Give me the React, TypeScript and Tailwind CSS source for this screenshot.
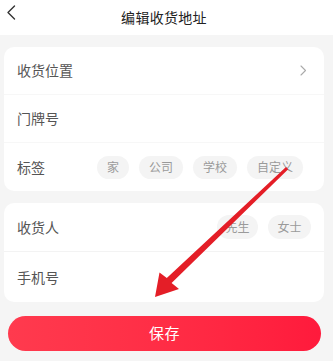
import React from "react";

const Tag = ({ children }: { children: React.ReactNode }) => (
  <span className="h-[23px] px-[10px] rounded-full bg-[#f4f4f4] text-[12px] text-[#9a9a9a] flex items-center leading-none">
    {children}
  </span>
);

export default function App() {
  return (
    <div
      className="relative w-[333px] h-[361px] bg-[#f5f5f5] overflow-hidden"
      style={{ fontFamily: '"Noto Sans CJK SC", "Noto Sans", sans-serif' }}
    >
      <div className="h-[35px] bg-white flex items-center">
        <div className="w-[328px] relative flex items-center justify-center h-full">
          <svg className="absolute left-[6px] top-[5px]" width="10" height="15" viewBox="0 0 10 15">
            <path d="M8.5 1 L2 7.5 L8.5 14" fill="none" stroke="#333" strokeWidth="1.4" strokeLinecap="round" strokeLinejoin="round" />
          </svg>
          <span className="text-[14px] text-[#222] tracking-[0.3px]">编辑收货地址</span>
        </div>
      </div>

      <div className="ml-[4px] w-[320px] mt-[12px] bg-white rounded-[10px]">
        <div className="h-[48px] flex items-center px-[13px] border-b border-[#f7f7f7]">
          <span className="text-[14px] text-[#555] flex-1">收货位置</span>
          <svg width="7" height="11" viewBox="0 0 7 11" className="mr-[4px]">
            <path d="M1 1 L5.5 5.5 L1 10" fill="none" stroke="#aaa" strokeWidth="1.1" strokeLinecap="round" strokeLinejoin="round" />
          </svg>
        </div>
        <div className="h-[48px] flex items-center px-[13px] border-b border-[#f7f7f7]">
          <span className="text-[14px] text-[#555]">门牌号</span>
        </div>
        <div className="h-[48px] flex items-center px-[13px]">
          <span className="text-[14px] text-[#555] w-[80px]">标签</span>
          <div className="flex gap-[10px]">
            <Tag>家</Tag>
            <Tag>公司</Tag>
            <Tag>学校</Tag>
            <Tag>自定义</Tag>
          </div>
        </div>
      </div>

      <div className="ml-[4px] w-[320px] mt-[12px] bg-white rounded-[10px]">
        <div className="h-[49px] flex items-center px-[13px] border-b border-[#f3f3f3]">
          <span className="text-[14px] text-[#555] flex-1">收货人</span>
          <div className="flex gap-[10px]">
            <span className="h-[24px] w-[41px] rounded-full bg-[#f4f4f4] text-[12px] text-[#9a9a9a] flex items-center justify-center leading-none">先生</span>
            <span className="h-[24px] w-[43px] rounded-full bg-[#f4f4f4] text-[12px] text-[#9a9a9a] flex items-center justify-center leading-none">女士</span>
          </div>
        </div>
        <div className="h-[50px] flex items-center px-[13px]">
          <span className="text-[14px] text-[#555]">手机号</span>
        </div>
      </div>

      <div className="ml-[8px] w-[313px] mt-[14px] h-[35px] rounded-full bg-gradient-to-r from-[#ff3a4e] to-[#ff1a3c] flex items-center justify-center">
        <span className="text-[15px] text-white tracking-[0.5px]">保存</span>
      </div>

      <svg className="absolute left-0 top-0 pointer-events-none" width="333" height="361" viewBox="0 0 333 361">
        <path
          d="M286 167 L288.2 169.2 L171.6 283 L179 289 L155 297 L159.5 272.5 L166.8 278 Z"
          fill="#e41e27"
        />
      </svg>
    </div>
  );
}
